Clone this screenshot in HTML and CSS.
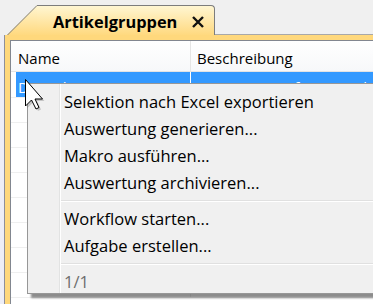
FILE: index.html
```html
<!DOCTYPE html>
<html lang="de">
<head>
<meta charset="UTF-8">
<meta name="viewport" content="width=device-width, initial-scale=1.0">
<title>Artikelgruppen</title>
<link rel="stylesheet" href="styles.css">
</head>
<body>

<div class="window">
    <!-- Tab strip -->
    <div class="tabbar">
        <div class="tab-lead"></div>
        <svg class="tab-slant" width="30" height="30" viewBox="0 0 30 30">
            <defs>
                <linearGradient id="tabfill" x1="0" y1="0" x2="0" y2="1">
                    <stop offset="0" stop-color="#fff6d2"/>
                    <stop offset="1" stop-color="#ffd97f"/>
                </linearGradient>
            </defs>
            <polygon points="30,0 30,30 0,30" fill="url(#tabfill)"/>
            <line x1="30" y1="0.5" x2="0.5" y2="30" stroke="#7d7d7d" stroke-width="1"/>
        </svg>
        <div class="tab">
            <span class="tab-title">Artikelgruppen</span>
            <svg class="tab-close" width="14" height="12" viewBox="0 0 14 12">
                <path d="M2 1 L12 11 M12 1 L2 11" stroke="#111" stroke-width="2.4" fill="none"/>
            </svg>
        </div>
        <div class="tab-rest"></div>
    </div>

    <!-- Document pane with grid -->
    <div class="main">
        <div class="gutter"></div>
        <div class="pane">
            <div class="grid">
                <div class="grid-head">
                    <div class="cell col-name">Name</div>
                    <div class="cell col-desc">Beschreibung</div>
                </div>
                <div class="grid-row first">
                    <div class="row-cells selected">
                        <div class="cell col-name">Dienstleistungen</div>
                        <div class="cell col-desc">Hauptgruppe für Dienstleistungen</div>
                    </div>
                </div>
                <div class="grid-row"><div class="row-cells"><div class="cell col-name"></div><div class="cell col-desc"></div></div></div>
                <div class="grid-row"><div class="row-cells"><div class="cell col-name"></div><div class="cell col-desc"></div></div></div>
                <div class="grid-row"><div class="row-cells"><div class="cell col-name"></div><div class="cell col-desc"></div></div></div>
                <div class="grid-row"><div class="row-cells"><div class="cell col-name"></div><div class="cell col-desc"></div></div></div>
                <div class="grid-row"><div class="row-cells"><div class="cell col-name"></div><div class="cell col-desc"></div></div></div>
                <div class="grid-row"><div class="row-cells"><div class="cell col-name"></div><div class="cell col-desc"></div></div></div>
                <div class="grid-row"><div class="row-cells"><div class="cell col-name"></div><div class="cell col-desc"></div></div></div>
                <div class="grid-row"><div class="row-cells"><div class="cell col-name"></div><div class="cell col-desc"></div></div></div>
            </div>
        </div>
    </div>

    <!-- Context menu -->
    <div class="menu">
        <div class="menu-item">Selektion nach Excel exportieren</div>
        <div class="menu-item">Auswertung generieren...</div>
        <div class="menu-item">Makro ausführen...</div>
        <div class="menu-item">Auswertung archivieren...</div>
        <div class="menu-sep"></div>
        <div class="menu-item">Workflow starten...</div>
        <div class="menu-item">Aufgabe erstellen...</div>
        <div class="menu-sep"></div>
        <div class="menu-item disabled">1/1</div>
    </div>

    <!-- Mouse pointer -->
    <svg class="cursor" width="22" height="34" viewBox="0 0 22 34">
        <polygon points="2.5,2.5 2.5,29 8.5,23 13,32 16,30.5 12,22 19.5,22" fill="#000" opacity="0.18"/>
        <polygon points="0.5,0.5 0.5,27 6.5,21 11,30 14,28.5 10,20 17.5,20" fill="#fff" stroke="#000" stroke-width="1" stroke-linejoin="miter"/>
    </svg>
</div>

</body>
</html>
```

FILE: styles.css
```css
body {
    margin: 0;
    overflow: hidden;
    background: #f0f0f0;
    font-family: "Open Sans", "Noto Sans", sans-serif;
}
.window {
    position: relative;
    width: 373px;
    height: 304px;
    overflow: hidden;
    display: flex;
    flex-direction: column;
}

/* Tab strip */
.tabbar {
    display: flex;
    align-items: flex-end;
    height: 35px;
    flex-shrink: 0;
}
.tab-lead {
    width: 7px;
    height: 100%;
    flex-shrink: 0;
}
.tab-slant {
    display: block;
    flex-shrink: 0;
}
.tab {
    width: 178px;
    height: 30px;
    flex-shrink: 0;
    box-sizing: border-box;
    display: flex;
    align-items: center;
    padding-left: 16px;
    background: linear-gradient(#fff6d2, #ffd97f);
    border-top: 1px solid #7d7d7d;
    border-right: 1px solid #7d7d7d;
    border-top-right-radius: 4px;
}
.tab-title {
    font-weight: 700;
    font-size: 16.4px;
    color: #000;
    padding-top: 1px;
}
.tab-close {
    margin-left: 14px;
    margin-top: 2px;
}
.tab-rest {
    flex: 1;
    height: 100%;
    box-sizing: border-box;
    border-bottom: 1px solid #a8a8a8;
}

/* Pane */
.main {
    flex: 1;
    display: flex;
    min-height: 0;
}
.gutter {
    width: 4px;
    flex-shrink: 0;
    background: #eeeef6;
}
.pane {
    flex: 1;
    min-width: 0;
    display: flex;
    background: #ffd87c;
    border-left: 1px solid #8e8f9a;
    padding: 5px 0 0 5px;
}
.grid {
    flex: 1;
    min-width: 0;
    background: #fff;
    border-left: 1px solid #828790;
    border-top: 1px solid #828790;
    overflow: hidden;
    font-size: 15px;
}
.cell {
    box-sizing: border-box;
    white-space: nowrap;
    overflow: hidden;
}
.col-name {
    width: 180px;
    flex-shrink: 0;
}
.col-desc {
    flex: 1;
    padding-left: 6px;
}

.grid-head {
    display: flex;
    height: 31px;
    box-sizing: border-box;
    border-bottom: 1px solid #e3e3e3;
    background: linear-gradient(#fff, #f7f8fa);
    color: #000;
}
.grid-head .cell {
    line-height: 26px;
    padding-top: 4px;
}
.grid-head .col-name {
    padding-left: 7px;
    border-right: 1px solid #e5e5e5;
}

.grid-row {
    height: 25px;
    box-sizing: border-box;
    border-bottom: 1px solid #efefef;
    display: flex;
}
.grid-row.first {
    height: 26px;
}
.row-cells {
    flex: 1;
    display: flex;
}
.grid-row .cell {
    line-height: 22px;
    padding-top: 4px;
}
.grid-row .col-name {
    padding-left: 2px;
    border-left: 5px solid #fff;
    border-right: 1px solid #efefef;
}
.row-cells.selected .cell {
    background: #3399ff;
    color: #fff;
}
.row-cells.selected .col-name {
    border-right-color: #fff;
}

/* Context menu */
.menu {
    position: absolute;
    left: 27px;
    top: 83px;
    width: 370px;
    height: 211px;
    box-sizing: border-box;
    padding-top: 4px;
    border: 1px solid #979797;
    background: linear-gradient(to right, #f0f0f0 31px, #e2e3e3 31px, #e2e3e3 32px, #fff 32px, #fff 33px, #f0f0f0 33px);
    box-shadow: 4px 4px 2px rgba(0, 0, 0, 0.45);
    font-size: 16.5px;
    color: #000;
}
.menu-item {
    height: 27px;
    line-height: 27px;
    padding-left: 36px;
    white-space: nowrap;
}
.menu-item.disabled {
    color: #6d6d6d;
}
.menu-sep {
    height: 1px;
    margin: 4px 0 3px 33px;
    background: #e0e0e0;
    border-bottom: 1px solid #fff;
}

/* Pointer */
.cursor {
    position: absolute;
    left: 25px;
    top: 79px;
}
```
